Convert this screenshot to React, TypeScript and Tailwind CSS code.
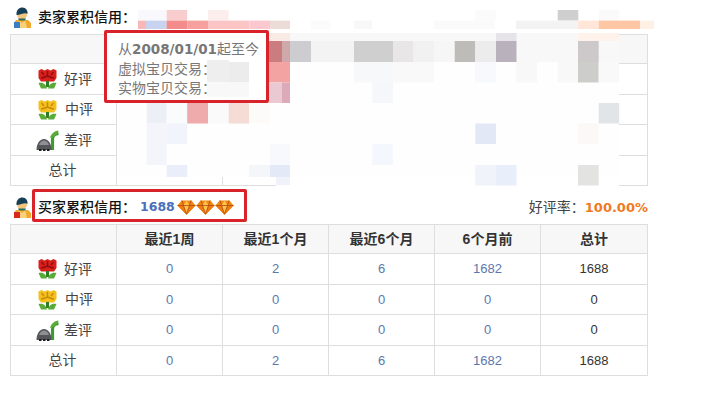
import React from "react";

const CJK = "font-['Liberation_Sans','Noto_Sans_CJK_SC',sans-serif]";

function Person({ badge }: { badge: string }) {
  return (
    <svg width="18" height="21" viewBox="0 0 18 21" className="shrink-0">
      <path d="M3 13h12l3 3v5H1v-5z" fill="#f0a92e" />
      <path d="M6 13l3 3 3-3 2 8H4z" fill="#f8d27a" />
      <circle cx="9" cy="7.500" r="5" fill="#f4c37c" />
      <path d="M3.500 8C3 3 6 0.500 9.500 0.500S15 3.500 14.500 7C12 5 8 8 3.500 8z" fill="#173f58" />
      <path d="M5 11.500h8l-1 2H6z" fill="#2e6a55" />
      <rect x="1" y="15" width="6" height="6" fill={badge} />
    </svg>
  );
}

function Flower({ petal, dark }: { petal: string; dark: string }) {
  return (
    <svg width="19" height="20" viewBox="0 0 19 20" className="shrink-0">
      <path d="M0.500 1.500L3.500 0l3 1.500L9.500 0l3 1.500L15.500 0l3 1.500v7.500l-2.500 3.500H3L0.500 9z" fill={petal} />
      <path d="M3.500 3l2.500 3M9.500 2v5M15.500 3L13 6M3 9c2 0 4-1 6.500-2C12 8 14 9 16 9" stroke={dark} strokeWidth="1.400" fill="none" />
      <rect x="8" y="12" width="3" height="6" fill="#2f7d24" />
      <path d="M0.500 14c3.500-1 7 0 8.500 5.500H3zM18.500 14c-3.500-1-7 0-8.500 5.500h6z" fill="#5bab38" />
    </svg>
  );
}

function Rock() {
  return (
    <svg width="23" height="21" viewBox="0 0 23 21" className="shrink-0">
      <path d="M16.500 20V9c0-3 2.500-5 6-5.500" stroke="#3f9a30" strokeWidth="3.200" fill="none" />
      <path d="M14 8c1-4 4-7 8.500-7.500-.5 3.500-4 6.500-8.500 7.500z" fill="#5bab38" />
      <path d="M0.500 20c0-6 3-11 7.500-11s7.500 5 7.500 11z" fill="#55565a" />
      <path d="M3 15c1-3 3-4.500 5-4.500s4 1.500 5 4.500z" fill="#8f9094" />
      <path d="M3 20h2.500M7 20h2.500M11 20h2.500" stroke="#1e1e20" strokeWidth="2" />
    </svg>
  );
}

function Gem() {
  return (
    <svg width="19" height="15" viewBox="0 0 19 15" className="shrink-0">
      <path d="M4.500 0.500h10l4 5L9.500 14.800 0.500 5.500z" fill="#f08a14" />
      <path d="M0.500 5.500h18L9.500 14.800z" fill="#ee7a12" />
      <path d="M6.500 5.500l3-5 3 5-3 8.500z" fill="#ffc24a" />
      <path d="M0.500 5.500h18M5 0.500l1.500 5 3 8.500 3-8.500 1.500-5" stroke="#b5480c" strokeWidth="0.800" fill="none" />
    </svg>
  );
}

const mosaic: [number, number, number, number, string][] = [
  [138, 10, 28, 10.5, "#f9f9fd"],
  [166.6, 10, 20.6, 10.6, "#f8cdcd"],
  [208, 10, 20.6, 10.6, "#fdeeee"],
  [475, 10, 21, 10.6, "#fbfbfb"],
  [557.7, 10, 20.6, 10.6, "#cfcfcf"],
  [598.7, 10, 20.6, 10.6, "#fafafa"],
  [138, 20.6, 8, 8.4, "#f9b8b8"],
  [146, 20.6, 20.6, 8.4, "#c7d3ef"],
  [166.6, 20.6, 20.6, 8.4, "#f58c8c"],
  [187.2, 20.6, 20.8, 8.4, "#f6a0a0"],
  [208, 20.6, 41.3, 8.4, "#fbc5c5"],
  [249.3, 20.6, 20.7, 8.4, "#fbc8cf"],
  [270, 20.6, 20, 8.4, "#ecdcd8"],
  [311, 20.6, 20, 8.4, "#fbfbfb"],
  [354, 20.6, 18, 8.4, "#f8f8f8"],
  [434, 20.6, 61, 8.4, "#fafafa"],
  [516, 20.6, 62, 8.4, "#f3f3f3"],
  [578, 20.6, 20.7, 8.4, "#ffe6d8"],
  [598.7, 20.6, 41.3, 8.4, "#ffc6a5"],
  [640, 20.6, 14, 8.4, "#fff0e6"],
  [269, 33, 350, 29, "#f8f8f8"],
  [269, 33, 21, 8, "#faeae6"],
  [496, 33, 20.5, 8, "#e6e4e8"],
  [578, 33, 41, 8, "#fff2ea"],
  [269, 41, 13, 21, "#cb7c7e"],
  [282, 41, 8, 21, "#cfa9a9"],
  [290, 41, 21, 21, "#cdccd1"],
  [311, 41, 43, 21, "#f3f3f3"],
  [354, 41, 39, 21, "#cfcfd0"],
  [393, 41, 20.5, 21, "#e8e6e6"],
  [413.5, 41, 20.5, 21, "#f1f1f1"],
  [434, 41, 20.7, 21, "#f6f6f6"],
  [454.7, 41, 20.6, 21, "#bdbcb9"],
  [475.3, 41, 20.7, 21, "#ececec"],
  [496, 41, 20.5, 21, "#b9b1bb"],
  [578, 41, 20.7, 21, "#cdc8ca"],
  [117, 62, 502, 115, "#fefefe"],
  [276, 177, 343, 9, "#ffffff"],
  [269, 62, 21, 20.5, "#f4a3a3"],
  [354, 62, 39, 20.5, "#f7f8fa"],
  [393, 62, 41, 20.5, "#f9f9f9"],
  [475, 62, 21, 20.5, "#f7f9fc"],
  [516, 62, 21, 20.5, "#f8f8f8"],
  [557.7, 62, 20.5, 20.5, "#f8f8f8"],
  [578, 62, 20.7, 20.5, "#cdcdc9"],
  [598.7, 62, 20.5, 20.5, "#f9f9f9"],
  [269, 82.5, 13, 20.5, "#ebc9d2"],
  [282, 82.5, 8, 20.5, "#dcaab8"],
  [372.3, 82.5, 20.7, 20.5, "#f5f7fb"],
  [146.7, 103, 20, 20.5, "#ecf0f6"],
  [166.7, 103, 20.5, 20.5, "#fafbfc"],
  [187.2, 103, 20.8, 20.5, "#efabab"],
  [208, 103, 20.7, 20.5, "#fafafa"],
  [228.7, 103, 20.6, 20.5, "#f5dcd4"],
  [249.3, 103, 20.7, 20.5, "#fdfbf8"],
  [598.7, 103, 20.5, 20.5, "#e1e5e8"],
  [146.7, 123.5, 20, 20.5, "#f3f5fb"],
  [166.7, 123.5, 20.5, 20.5, "#f1f4fa"],
  [475.3, 123.5, 20.7, 20.5, "#e2e8f5"],
  [578, 123.5, 20.7, 20.5, "#fcf8f5"],
  [146.7, 144, 20, 21, "#f3f5fa"],
  [270, 144, 20, 21, "#f8f9fc"],
  [372.3, 144, 20.7, 21, "#f4f7fd"],
  [166.7, 165, 20.5, 12, "#e9eefa"],
  [249.3, 165, 20.7, 12, "#f5f6fa"],
  [270, 165, 20, 12, "#e3e9f6"],
  [276, 177, 14, 8, "#f0f2fa"],
  [475.3, 165, 20.7, 20.5, "#f1f3fa"],
  [496, 165, 20.5, 20.5, "#e9eefb"],
  [578, 165, 20.7, 20.5, "#e3e3e1"],
];

const tipMosaic: [number, number, number, number, string][] = [
  [207, 60, 22, 22, "#eeeeee"],
  [229, 62, 20, 20, "#ececec"],
  [207, 82, 42, 15, "#f8f8f8"],
];

const cols = ["最近1周", "最近1个月", "最近6个月", "6个月前", "总计"];

const rowLabel = (kind: number) => {
  if (kind === 0)
    return (
      <div className="flex items-center gap-[7px] pl-[27px]">
        <Flower petal="#d9201c" dark="#8f0f10" />
        <span>好评</span>
      </div>
    );
  if (kind === 1)
    return (
      <div className="flex items-center gap-[8px] pl-[27px]">
        <Flower petal="#f4c01e" dark="#c98a0c" />
        <span>中评</span>
      </div>
    );
  if (kind === 2)
    return (
      <div className="flex items-center gap-[5px] pl-[25px]">
        <Rock />
        <span>差评</span>
      </div>
    );
  return <div className="pr-[2px] text-center">总计</div>;
};

function CreditTable({ rows }: { rows: (string | number)[][] }) {
  const heights = ["h-[31px]", "h-[30px]", "h-[31px]", "h-[30px]"];
  return (
    <table className="w-[637px] table-fixed border-collapse text-[13px] text-[#333]">
      <colgroup>
        <col className="w-[106px]" />
        <col className="w-[106px]" />
        <col className="w-[106px]" />
        <col className="w-[106px]" />
        <col className="w-[106px]" />
        <col className="w-[107px]" />
      </colgroup>
      <thead>
        <tr className="h-[29px] bg-[#f7f7f7]">
          <th className="border border-[#dedede]" />
          {cols.map((c) => (
            <th key={c} className="border border-[#dedede] text-center text-[14px] font-bold text-[#333]">
              {c}
            </th>
          ))}
        </tr>
      </thead>
      <tbody>
        {rows.map((r, i) => (
          <tr key={i} className={heights[i]}>
            <td className="border border-[#dedede] text-[14px] text-[#444]">{rowLabel(i)}</td>
            {r.map((v, j) => (
              <td
                key={j}
                className={
                  j === 4
                    ? "border border-[#dedede] text-center text-[#333]"
                    : "border border-[#dedede] text-center text-[#5b78ae]"
                }
              >
                {v}
              </td>
            ))}
          </tr>
        ))}
      </tbody>
    </table>
  );
}

export default function App() {
  const empty = [
    ["", "", "", "", ""],
    ["", "", "", "", ""],
    ["", "", "", "", ""],
    ["", "", "", "", ""],
  ];
  const data = [
    [0, 2, 6, 1682, 1688],
    [0, 0, 0, 0, 0],
    [0, 0, 0, 0, 0],
    [0, 2, 6, 1682, 1688],
  ];
  return (
    <div className={`relative h-[400px] w-[708px] overflow-hidden bg-white pl-[10px] pt-[7px] ${CJK}`}>
      <div className="flex h-[21px] w-[638px] items-center gap-[7px] pl-[3px] text-[14px] text-[#111]">
        <Person badge="#3a7fc4" />
        <span className="font-medium">卖家累积信用：</span>
      </div>
      <div className="mt-[6px]">
        <CreditTable rows={empty} />
      </div>

      <div className="mt-[11px] flex h-[21px] w-[638px] items-center justify-between pl-[3px] text-[14px] text-[#111]">
        <div className="flex items-center gap-[7px]">
          <Person badge="#d8281e" />
          <span className="font-medium">买家累积信用：</span>
          <div className="-ml-[3px] flex items-center">
            <span className="mr-[2px] font-['DejaVu_Sans',sans-serif] text-[12.5px] font-bold text-[#4a6fbb]">1688</span>
            <Gem />
            <Gem />
            <Gem />
          </div>
        </div>
        <div className="flex items-center text-[14px] text-[#444]">
          <span>好评率：</span>
          <span className="font-['DejaVu_Sans',sans-serif] text-[13px] font-bold text-[#ef7a22]">100.00%</span>
        </div>
      </div>
      <div className="mt-[6px]">
        <CreditTable rows={data} />
      </div>

      <svg width="708" height="400" className="absolute left-0 top-0">
        {mosaic.map(([x, y, w, h, c], i) => (
          <rect key={i} x={x} y={y} width={w} height={h} fill={c} />
        ))}
      </svg>

      <div className="absolute left-[104px] top-[30px] h-[73px] w-[165px] rounded-[2px] border-[3px] border-[#d9232b] bg-white pl-[11px] pt-[7px] text-[14px] leading-[19.5px] text-[#777]">
        <div className="whitespace-nowrap">
          从<span className="font-['DejaVu_Sans',sans-serif] text-[13.5px] font-bold">2008/01/01</span>起至今
        </div>
        <div className="whitespace-nowrap">虚拟宝贝交易：</div>
        <div className="whitespace-nowrap">实物宝贝交易：</div>
      </div>
      <svg width="708" height="400" className="absolute left-0 top-0">
        {tipMosaic.map(([x, y, w, h, c], i) => (
          <rect key={i} x={x} y={y} width={w} height={h} fill={c} />
        ))}
      </svg>

      <div className="absolute left-[32px] top-[189px] h-[33px] w-[215px] rounded-[2px] border-[3px] border-[#d9232b]" />
    </div>
  );
}
